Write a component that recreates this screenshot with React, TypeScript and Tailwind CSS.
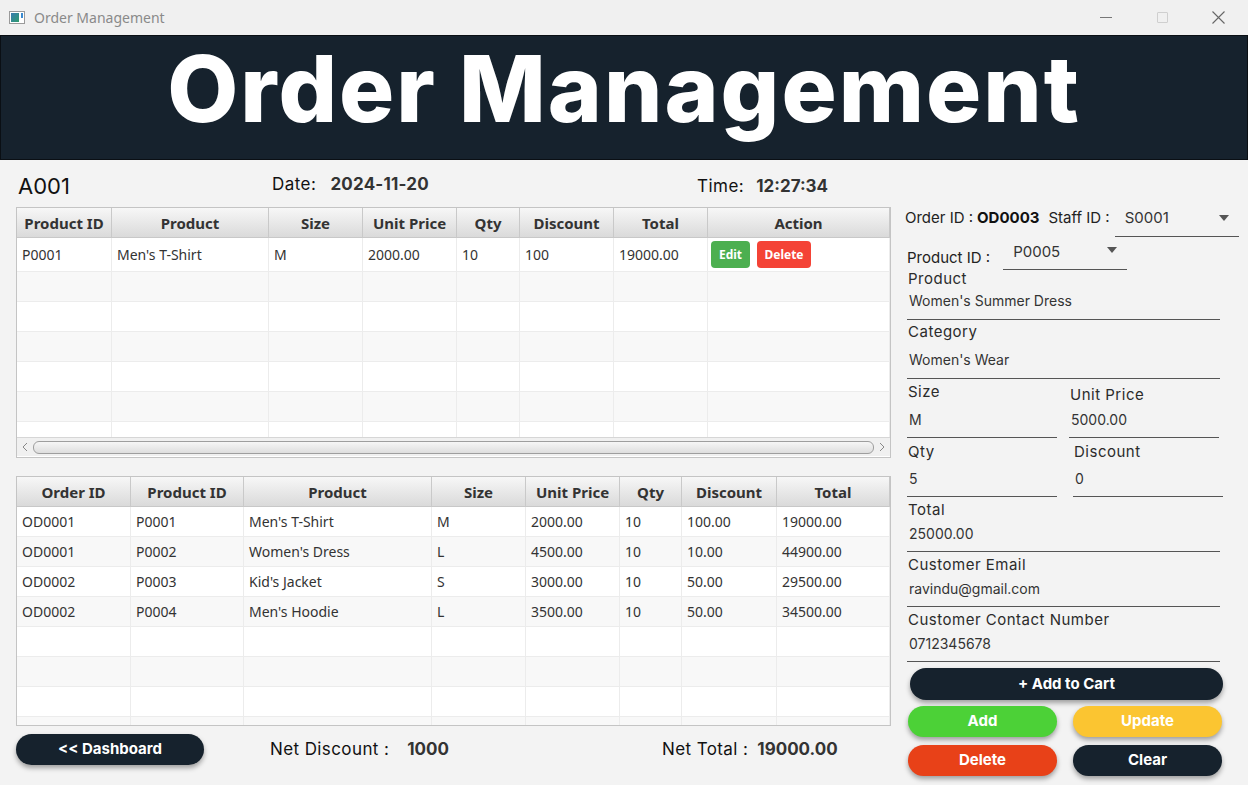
import React from "react";

const P = "font-['Inter','Noto_Sans',sans-serif]";
const S = "font-['Noto_Sans','Open_Sans',sans-serif]";

type Col = { name: string; w: number };

function Header({ cols }: { cols: Col[] }) {
  return (
    <div className="flex h-[30px] shrink-0 border-b border-[#c8c8c8] bg-gradient-to-b from-[#f7f7f7] to-[#dadada]">
      {cols.map((c, i) => (
        <div
          key={i}
          style={{ width: c.w }}
          className={`flex shrink-0 items-center justify-center border-r border-[#c9c9c9] pt-[1px] text-[15px] font-bold text-[#333] ${S}`}
        >
          {c.name}
        </div>
      ))}
    </div>
  );
}

function Row({ cols, cells, h, idx, action }: { cols: Col[]; cells: string[]; h: number; idx: number; action?: boolean }) {
  return (
    <div
      style={{ height: h }}
      className={`flex shrink-0 border-b border-[#ececec] ${idx % 2 === 0 ? "bg-white" : "bg-[#f8f8f8]"}`}
    >
      {cols.map((c, i) => {
        const isAction = action && i === cols.length - 1 && cells.length > 0;
        return (
          <div
            key={i}
            style={{ width: c.w }}
            className={`flex shrink-0 items-center border-r border-[#ececec] ${isAction ? "pl-[3px]" : "pl-[5px]"} text-[14px] text-[#333] ${S}`}
          >
            {isAction ? (
              <div className="flex gap-[7px]">
                <span className="flex h-[27px] w-[39px] items-center justify-center rounded-[4px] bg-[#4caf50] text-[12px] font-bold text-white">
                  Edit
                </span>
                <span className="flex h-[27px] w-[54px] items-center justify-center rounded-[4px] bg-[#f44336] text-[12px] font-bold text-white">
                  Delete
                </span>
              </div>
            ) : (
              cells[i] ?? ""
            )}
          </div>
        );
      })}
    </div>
  );
}

const cols1: Col[] = [
  { name: "Product ID", w: 95 },
  { name: "Product", w: 157 },
  { name: "Size", w: 94 },
  { name: "Unit Price", w: 94 },
  { name: "Qty", w: 63 },
  { name: "Discount", w: 94 },
  { name: "Total", w: 94 },
  { name: "Action", w: 182 },
];

const cols2: Col[] = [
  { name: "Order ID", w: 114 },
  { name: "Product ID", w: 113 },
  { name: "Product", w: 188 },
  { name: "Size", w: 94 },
  { name: "Unit Price", w: 94 },
  { name: "Qty", w: 62 },
  { name: "Discount", w: 95 },
  { name: "Total", w: 113 },
];

const rows2 = [
  ["OD0001", "P0001", "Men's T-Shirt", "M", "2000.00", "10", "100.00", "19000.00"],
  ["OD0001", "P0002", "Women's Dress", "L", "4500.00", "10", "10.00", "44900.00"],
  ["OD0002", "P0003", "Kid's Jacket", "S", "3000.00", "10", "50.00", "29500.00"],
  ["OD0002", "P0004", "Men's Hoodie", "L", "3500.00", "10", "50.00", "34500.00"],
];

function Field({
  label,
  value,
  w = 313,
  mt,
  pt,
  h,
  ml = 0,
  labelH = 20,
}: {
  label: string;
  value: string;
  w?: number;
  mt: number;
  pt: number;
  h: number;
  ml?: number;
  labelH?: number;
}) {
  return (
    <div style={{ marginTop: mt, width: w, marginLeft: ml }} className={`flex flex-col ${P}`}>
      <div style={{ height: labelH, lineHeight: `${labelH}px` }} className="pl-[1px] text-[15px] tracking-[0.5px] text-[#2b2b2b]">
        {label}
      </div>
      <div
        style={{ height: h, paddingTop: pt }}
        className="box-border border-b border-[#555] pl-[2px] text-[14px] leading-[20px] text-[#333]"
      >
        {value}
      </div>
    </div>
  );
}

function Arrow() {
  return (
    <svg width="10" height="6" viewBox="0 0 10 6">
      <path d="M0 0 L10 0 L5 6 Z" fill="#555" />
    </svg>
  );
}

function Btn({ children, cls, w, h = 31 }: { children: React.ReactNode; cls: string; w: number; h?: number }) {
  return (
    <div
      style={{ width: w, height: h }}
      className={`flex items-center justify-center rounded-full text-[15px] font-bold text-white shadow-[0_3px_5px_rgba(0,0,0,0.35)] ${P} ${cls}`}
    >
      {children}
    </div>
  );
}

export default function App() {
  return (
    <div className="flex h-[785px] w-[1248px] flex-col overflow-hidden bg-[#f3f3f3]">
      {/* title bar */}
      <div className="flex h-[35px] shrink-0 items-center bg-[#f0f0f0]">
        <div className="ml-[9px] flex h-[13px] w-[16px] items-center border border-[#9a9a9a] bg-white p-[1px]">
          <div className="h-full w-[9px] bg-gradient-to-br from-[#3a7bb0] to-[#2f9a6a]" />
          <div className="ml-[2px] h-[5px] w-[2px] self-start bg-[#3a8ad0]" />
        </div>
        <span className={`ml-[9px] text-[14px] text-[#8a8a8a] ${S}`}>Order Management</span>
        <div className="ml-auto flex items-center">
          <div className="flex w-[57px] justify-center">
            <div className="h-px w-[12px] bg-[#777]" />
          </div>
          <div className="flex w-[57px] justify-center">
            <div className="h-[11px] w-[11px] rounded-[1px] border border-[#cfcfcf]" />
          </div>
          <div className="flex w-[57px] justify-center pr-[2px]">
            <svg width="13" height="13" viewBox="0 0 13 13">
              <path d="M0.5 0.5 L12.5 12.5 M12.5 0.5 L0.5 12.5" stroke="#666" strokeWidth="1.1" />
            </svg>
          </div>
        </div>
      </div>
      {/* banner */}
      <div className="flex h-[125px] shrink-0 items-center justify-center border border-[#0a0f14] bg-[#16222d]">
        <h1 className={`pb-[18px] text-[92px] font-extrabold tracking-[2px] text-white ${P}`}>Order Management</h1>
      </div>
      <div className="flex flex-1">
        {/* left */}
        <div className="flex w-[891px] shrink-0 flex-col pl-[16px]">
          <div className={`flex h-[47px] items-center ${P}`}>
            <span className="ml-[2px] mt-[5px] text-[22px] text-[#111]">A001</span>
            <span className="ml-[202px] mt-[3px] text-[17px] tracking-[0.5px] text-[#111]">Date:</span>
            <span className="ml-[14px] mt-[3px] text-[17px] font-bold tracking-[0.2px] text-[#333]">2024-11-20</span>
            <span className="ml-[268px] mt-[7px] text-[17px] tracking-[0.5px] text-[#111]">Time:</span>
            <span className="ml-[12px] mt-[7px] text-[17px] font-bold text-[#333]">12:27:34</span>
          </div>
          {/* table 1 */}
          <div className="flex h-[251px] w-[875px] flex-col overflow-hidden border border-[#c4c4c4] bg-white">
            <Header cols={cols1} />
            <div className="flex h-[199px] flex-col overflow-hidden">
              <Row cols={cols1} cells={["P0001", "Men's T-Shirt", "M", "2000.00", "10", "100", "19000.00"]} h={34} idx={0} action />
              {[1, 2, 3, 4, 5, 6].map((i) => (
                <Row key={i} cols={cols1} cells={[]} h={30} idx={i} />
              ))}
            </div>
            <div className="flex h-[19px] shrink-0 items-center border-t border-[#d6d6d6] bg-[#f0f0f0] px-[4px]">
              <svg width="8" height="10" viewBox="0 0 8 10">
                <path d="M6 1 L2 5 L6 9" stroke="#888" fill="none" strokeWidth="1" />
              </svg>
              <div className="mx-[4px] h-[13px] flex-1 rounded-[6px] border border-[#9e9e9e] bg-gradient-to-b from-[#f6f6f6] to-[#dedede]" />
              <svg width="8" height="10" viewBox="0 0 8 10">
                <path d="M2 1 L6 5 L2 9" stroke="#888" fill="none" strokeWidth="1" />
              </svg>
            </div>
          </div>
          {/* table 2 */}
          <div className="mt-[18px] flex h-[250px] w-[875px] flex-col overflow-hidden border border-[#c4c4c4] bg-white">
            <Header cols={cols2} />
            <div className="flex flex-1 flex-col overflow-hidden">
              {rows2.map((r, i) => (
                <Row key={i} cols={cols2} cells={r} h={30} idx={i} />
              ))}
              {[4, 5, 6, 7].map((i) => (
                <Row key={i} cols={cols2} cells={[]} h={30} idx={i} />
              ))}
            </div>
          </div>
          {/* bottom */}
          <div className={`mt-[8px] flex items-center ${P}`}>
            <Btn cls="bg-[#16222d]" w={188}>
              &lt;&lt; Dashboard
            </Btn>
            <span className="ml-[66px] text-[17px] tracking-[0.4px] text-[#111]">Net Discount :</span>
            <span className="ml-[18px] text-[17px] font-bold text-[#333]">1000</span>
            <span className="ml-[213px] text-[17px] tracking-[0.4px] text-[#111]">Net Total :</span>
            <span className="ml-[9px] text-[17px] font-bold text-[#333]">19000.00</span>
          </div>
        </div>
        {/* right */}
        <div className={`flex flex-1 flex-col pl-[16px] ${P}`}>
          <div className="mt-[40px] flex h-[37px] items-center">
            <span className="ml-[-2px] text-[15px] text-[#222]">Order ID :</span>
            <span className="ml-[4px] text-[15px] font-bold text-[#111]">OD0003</span>
            <span className="ml-[9px] text-[15px] text-[#222]">Staff ID :</span>
            <div className="ml-[5px] flex h-full w-[124px] items-center justify-between border-b border-[#555] pl-[10px] pr-[10px]">
              <span className="text-[15px] text-[#333]">S0001</span>
              <Arrow />
            </div>
          </div>
          <div className="flex h-[33px] items-end">
            <span className="mb-[2px] text-[15px] leading-[20px] text-[#222]">Product ID :</span>
            <div className="ml-[13px] flex h-full w-[124px] items-start justify-between border-b border-[#555] pl-[10px] pr-[10px] pt-[5px]">
              <span className="text-[15px] leading-[20px] text-[#333]">P0005</span>
              <div className="pt-[5px]">
                <Arrow />
              </div>
            </div>
          </div>
          <Field label="Product" value="Women's Summer Dress" mt={0} labelH={18} pt={3} h={32} />
          <Field label="Category" value="Women's Wear" mt={2} pt={8} h={37} />
          <div className="flex">
            <Field label="Size" value="M" w={150} mt={3} pt={8} h={36} />
            <Field label="Unit Price" value="5000.00" w={150} ml={12} mt={6} pt={5} h={33} />
          </div>
          <div className="flex">
            <Field label="Qty" value="5" w={150} mt={4} pt={7} h={35} />
            <Field label="Discount" value="0" w={150} ml={16} mt={4} pt={7} h={35} />
          </div>
          <Field label="Total" value="25000.00" mt={3} pt={4} h={32} />
          <Field label="Customer Email" value="ravindu@gmail.com" mt={3} pt={4} h={32} />
          <Field label="Customer Contact Number" value="0712345678" mt={3} pt={4} h={32} />
          <div className="ml-[3px] mt-[6px]">
            <Btn cls="bg-[#16222d]" w={313} h={32}>
              + Add to Cart
            </Btn>
          </div>
          <div className="ml-[1px] mt-[6px] flex gap-[16px]">
            <Btn cls="bg-[#4cd137]" w={149}>
              Add
            </Btn>
            <Btn cls="bg-[#fbc531]" w={149}>
              Update
            </Btn>
          </div>
          <div className="ml-[1px] mt-[8px] flex gap-[16px]">
            <Btn cls="bg-[#e84118]" w={149}>
              Delete
            </Btn>
            <Btn cls="bg-[#16222d]" w={149}>
              Clear
            </Btn>
          </div>
        </div>
      </div>
    </div>
  );
}
